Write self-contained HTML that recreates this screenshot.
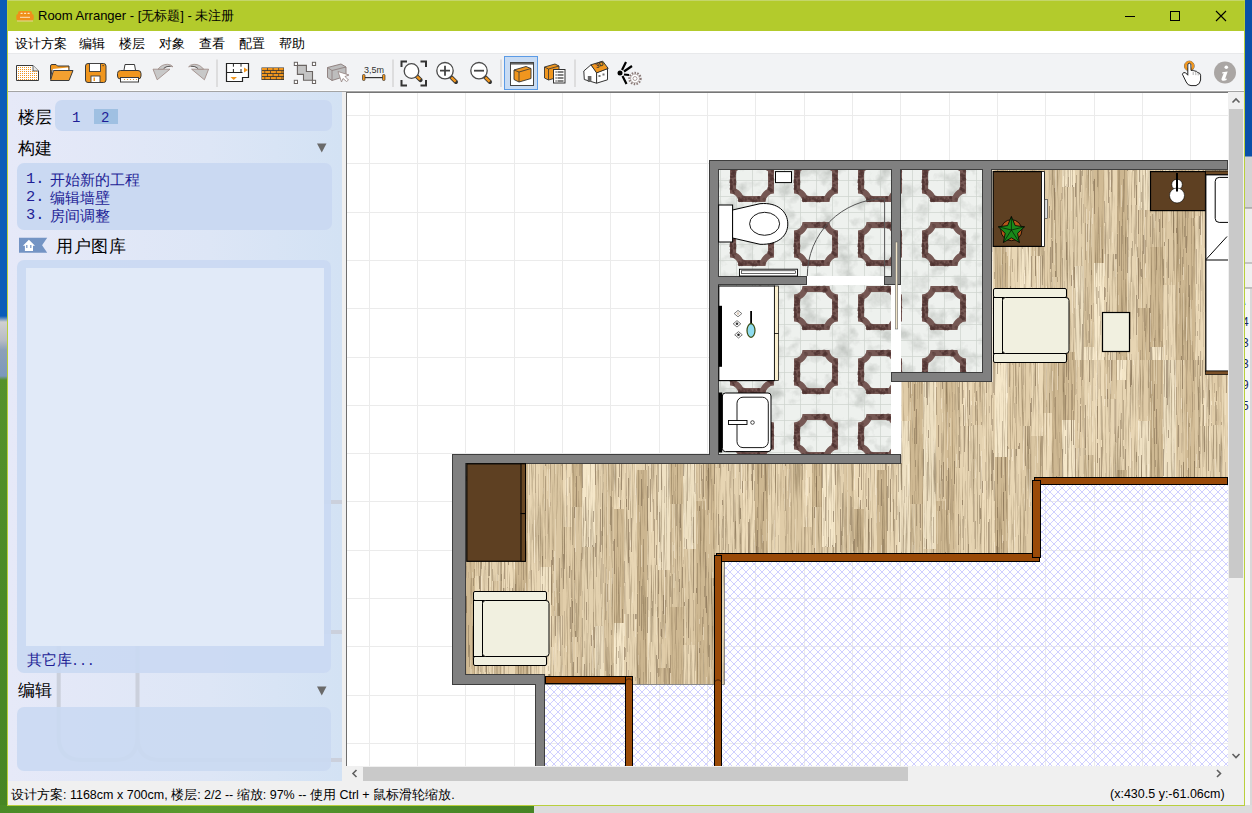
<!DOCTYPE html>
<html><head><meta charset="utf-8">
<style>
*{margin:0;padding:0;box-sizing:border-box}
html,body{width:1252px;height:813px;overflow:hidden;font-family:"Liberation Sans",sans-serif}
body{position:relative;background:#4a8a26}
.a{position:absolute}
#desk-l{left:0;top:0;width:8px;height:813px;background:linear-gradient(#0a5cb8 0,#0a5cb8 316px,#d0d0d0 322px,#b8bcc4 340px,#8ca0b8 350px,#7c98bc 376px,#55922c 380px,#4a8a26 600px,#468524 813px)}
#desk-b{left:0;top:805px;width:1252px;height:8px;background:linear-gradient(90deg,#4a8a26,#5a9a2e 200px,#4c8c28 400px,#468424 534px)}
#desk-b2{left:534px;top:805px;width:718px;height:8px;background:#dcdcdc}
#desk-r{left:1245px;top:0;width:7px;height:805px;background:linear-gradient(#0a50a8 0,#0a50a8 156px,#d4d4d4 157px,#d4d4d4 207px,#888 208px,#ececec 209px,#ececec 262px,#999 263px,#f0f0f0 264px,#f0f0f0 287px,#888 288px,#f7f7f7 289px)}
#wborder{left:7px;top:0;width:1238px;height:806px;border:1px solid #b9cf3c;border-top:1px solid #c4d66a}
#title{left:8px;top:1px;width:1236px;height:30px;background:#b3cb2c}
#title .t{left:30px;top:6px;font-size:13px;color:#000;white-space:nowrap}
#menu{left:8px;top:31px;width:1236px;height:23px;background:#fff;border-bottom:1px solid #e8e9eb}
#menu span{position:absolute;top:5px;font-size:12.6px;color:#000;white-space:nowrap}
#tb{left:8px;top:54px;width:1236px;height:38px;background:#f2f3f5;border-bottom:1px solid #a4a4a4;box-shadow:inset 0 -1px 0 #fbfbfb}
#panel{left:8px;top:92px;width:334px;height:689px;background:linear-gradient(90deg,#e6e9f8,#dde6f6 60%,#d3e2f4)}
#gap{left:342px;top:92px;width:4px;height:689px;background:#f0f0f0}
#vs{left:1228px;top:92px;width:16px;height:674px;background:#f0f0f0}
#hs{left:346px;top:766px;width:882px;height:15px;background:#f0f0f0}
#corner{left:1228px;top:766px;width:16px;height:15px;background:#f0f0f0}
#status{left:8px;top:781px;width:1236px;height:24px;background:#f0f0f0}
#status span{position:absolute;top:6px;font-size:12.5px;color:#000;white-space:nowrap}
.box{position:absolute;background:#cad9f2;border-radius:7px}
.hd{position:absolute;font-size:16.8px;color:#000;white-space:nowrap}
.bl{position:absolute;color:#1e1e96;font-size:15.4px;white-space:nowrap}
</style></head><body>
<div id="desk-l" class="a"></div>
<div id="desk-b" class="a"></div>
<div id="desk-b2" class="a"></div>
<div id="desk-r" class="a" style="overflow:hidden">
  <div class="a" style="left:-3px;top:291px;font-size:12px;line-height:21px;color:#1a2a60;width:20px">\<br>4<br>3<br>3<br>9<br>5</div>
  <div class="a" style="left:5px;top:289px;width:2px;height:516px;background:#d8d8d8"></div>
</div>
<div id="wborder" class="a"></div>
<div id="title" class="a">
  <svg class="a" style="left:8px;top:9px" width="18" height="12" viewBox="0 0 18 12">
    <rect x="2" y="1" width="14" height="6" rx="2" fill="#f0901a"/>
    <rect x="0.3" y="4" width="4" height="6.5" rx="1.8" fill="#f0901a"/>
    <rect x="13.7" y="4" width="4" height="6.5" rx="1.8" fill="#f0901a"/>
    <rect x="3" y="6.5" width="12" height="4" fill="#f0901a"/>
    <rect x="4.5" y="2.8" width="2.2" height="1.3" rx="0.6" fill="#fde6c0"/><rect x="8" y="2.8" width="2.2" height="1.3" rx="0.6" fill="#fde6c0"/><rect x="11.5" y="2.8" width="2.2" height="1.3" rx="0.6" fill="#fde6c0"/>
    <rect x="4" y="6.8" width="10" height="1" fill="#fde6c0"/>
    <path d="M1,11 L17,11" stroke="#f8d8b0" stroke-width="0.8"/>
  </svg>
  <div class="t a">Room Arranger - [无标题] - 未注册</div>
  <svg class="a" style="left:1110px;top:0" width="126" height="30" viewBox="0 0 126 30">
    <rect x="7" y="15" width="10" height="1" fill="#000"/>
    <rect x="52.5" y="10.5" width="9" height="9" fill="none" stroke="#000" stroke-width="1"/>
    <path d="M98,10 L108,20 M108,10 L98,20" stroke="#000" stroke-width="1.1"/>
  </svg>
</div>
<div id="menu" class="a">
  <span style="left:7px">设计方案</span>
  <span style="left:71px">编辑</span>
  <span style="left:111px">楼层</span>
  <span style="left:151px">对象</span>
  <span style="left:191px">查看</span>
  <span style="left:231px">配置</span>
  <span style="left:271px">帮助</span>
</div>
<div id="tb" class="a"></div>
<svg class="a" style="left:0;top:54px" width="1252" height="38" viewBox="0 54 1252 38">
<path d="M16.5,65.5 L33,65.5 L38.5,71 L38.5,80.5 L16.5,80.5 Z" fill="#fff" stroke="#3a3a3a" stroke-width="1"/>
<path d="M33,65.5 L33,71 L38.5,71" fill="#e8e8e8" stroke="#3a3a3a" stroke-width="0.8"/>
<rect x="18" y="67" width="1" height="1" fill="#f0961e"/>
<rect x="20" y="67" width="1" height="1" fill="#f0961e"/>
<rect x="22" y="67" width="1" height="1" fill="#f0961e"/>
<rect x="24" y="67" width="1" height="1" fill="#f0961e"/>
<rect x="26" y="67" width="1" height="1" fill="#f0961e"/>
<rect x="28" y="67" width="1" height="1" fill="#f0961e"/>
<rect x="30" y="67" width="1" height="1" fill="#f0961e"/>
<rect x="18" y="69" width="1" height="1" fill="#f0961e"/>
<rect x="20" y="69" width="1" height="1" fill="#f0961e"/>
<rect x="22" y="69" width="1" height="1" fill="#f0961e"/>
<rect x="24" y="69" width="1" height="1" fill="#f0961e"/>
<rect x="26" y="69" width="1" height="1" fill="#f0961e"/>
<rect x="28" y="69" width="1" height="1" fill="#f0961e"/>
<rect x="30" y="69" width="1" height="1" fill="#f0961e"/>
<rect x="18" y="71" width="1" height="1" fill="#f0961e"/>
<rect x="20" y="71" width="1" height="1" fill="#f0961e"/>
<rect x="22" y="71" width="1" height="1" fill="#f0961e"/>
<rect x="24" y="71" width="1" height="1" fill="#f0961e"/>
<rect x="26" y="71" width="1" height="1" fill="#f0961e"/>
<rect x="28" y="71" width="1" height="1" fill="#f0961e"/>
<rect x="30" y="71" width="1" height="1" fill="#f0961e"/>
<rect x="32" y="71" width="1" height="1" fill="#f0961e"/>
<rect x="34" y="71" width="1" height="1" fill="#f0961e"/>
<rect x="36" y="71" width="1" height="1" fill="#f0961e"/>
<rect x="18" y="73" width="1" height="1" fill="#f0961e"/>
<rect x="20" y="73" width="1" height="1" fill="#f0961e"/>
<rect x="22" y="73" width="1" height="1" fill="#f0961e"/>
<rect x="24" y="73" width="1" height="1" fill="#f0961e"/>
<rect x="26" y="73" width="1" height="1" fill="#f0961e"/>
<rect x="28" y="73" width="1" height="1" fill="#f0961e"/>
<rect x="30" y="73" width="1" height="1" fill="#f0961e"/>
<rect x="32" y="73" width="1" height="1" fill="#f0961e"/>
<rect x="34" y="73" width="1" height="1" fill="#f0961e"/>
<rect x="36" y="73" width="1" height="1" fill="#f0961e"/>
<rect x="18" y="75" width="1" height="1" fill="#f0961e"/>
<rect x="20" y="75" width="1" height="1" fill="#f0961e"/>
<rect x="22" y="75" width="1" height="1" fill="#f0961e"/>
<rect x="24" y="75" width="1" height="1" fill="#f0961e"/>
<rect x="26" y="75" width="1" height="1" fill="#f0961e"/>
<rect x="28" y="75" width="1" height="1" fill="#f0961e"/>
<rect x="30" y="75" width="1" height="1" fill="#f0961e"/>
<rect x="32" y="75" width="1" height="1" fill="#f0961e"/>
<rect x="34" y="75" width="1" height="1" fill="#f0961e"/>
<rect x="36" y="75" width="1" height="1" fill="#f0961e"/>
<rect x="18" y="77" width="1" height="1" fill="#f0961e"/>
<rect x="20" y="77" width="1" height="1" fill="#f0961e"/>
<rect x="22" y="77" width="1" height="1" fill="#f0961e"/>
<rect x="24" y="77" width="1" height="1" fill="#f0961e"/>
<rect x="26" y="77" width="1" height="1" fill="#f0961e"/>
<rect x="28" y="77" width="1" height="1" fill="#f0961e"/>
<rect x="30" y="77" width="1" height="1" fill="#f0961e"/>
<rect x="32" y="77" width="1" height="1" fill="#f0961e"/>
<rect x="34" y="77" width="1" height="1" fill="#f0961e"/>
<rect x="36" y="77" width="1" height="1" fill="#f0961e"/>
<rect x="18" y="79" width="1" height="1" fill="#f0961e"/>
<rect x="20" y="79" width="1" height="1" fill="#f0961e"/>
<rect x="22" y="79" width="1" height="1" fill="#f0961e"/>
<rect x="24" y="79" width="1" height="1" fill="#f0961e"/>
<rect x="26" y="79" width="1" height="1" fill="#f0961e"/>
<rect x="28" y="79" width="1" height="1" fill="#f0961e"/>
<rect x="30" y="79" width="1" height="1" fill="#f0961e"/>
<rect x="32" y="79" width="1" height="1" fill="#f0961e"/>
<rect x="34" y="79" width="1" height="1" fill="#f0961e"/>
<rect x="36" y="79" width="1" height="1" fill="#f0961e"/>
<path d="M50.5,66 Q50.5,64.5 52,64.5 L56,64.5 L57.5,66 L69,66 L69,70 L52,70 L50.5,79 Z" fill="#f0961e" stroke="#3a3a3a" stroke-width="1"/>
<path d="M52.5,69 L68,67.5 L68.5,71 L53,72 Z" fill="#fff"/>
<path d="M53.5,70.5 L73,70.5 L69,80.5 L50.5,80.5 Z" fill="#f4a030" stroke="#3a3a3a" stroke-width="1" stroke-linejoin="round"/>
<rect x="85.5" y="63.5" width="20.5" height="19" rx="2.5" fill="#f0961e" stroke="#3a3a3a" stroke-width="1"/>
<rect x="89.5" y="63.5" width="11" height="8" fill="#fff" stroke="#3a3a3a" stroke-width="0.9"/>
<rect x="91" y="76" width="9" height="6.5" fill="#fff" stroke="#3a3a3a" stroke-width="0.9"/>
<rect x="93.5" y="77.5" width="1.5" height="3.5" fill="#f0961e"/>
<rect x="102.5" y="65" width="1.2" height="1.2" fill="#3a3a3a"/>
<path d="M123.5,73 L125,64.5 L134.5,64.5 L136,73 Z" fill="#fff" stroke="#3a3a3a" stroke-width="1"/>
<rect x="117.5" y="70.5" width="23.5" height="8.5" rx="3" fill="#f0961e" stroke="#3a3a3a" stroke-width="1"/>
<rect x="120.5" y="77.5" width="18" height="4.5" fill="#fff" stroke="#3a3a3a" stroke-width="1"/>
<rect x="124" y="79" width="1" height="1" fill="#f0961e"/>
<rect x="127" y="79" width="1" height="1" fill="#f0961e"/>
<rect x="130" y="79" width="1" height="1" fill="#f0961e"/>
<rect x="133" y="79" width="1" height="1" fill="#f0961e"/>
<rect x="136" y="79" width="1" height="1" fill="#f0961e"/>
<path d="M153,69.2 L170,69.2 L157.2,79.8 Z" fill="#c8c8c8" stroke="#9a8580" stroke-width="0.8" stroke-linejoin="round"/><path d="M158,69.2 Q161.5,64.3 167.5,64.3 Q171.5,64.5 173,66.8 Q169,65.6 166,66.8 Q164,67.8 163.5,69.2 Z" fill="#c8c8c8" stroke="#9a8580" stroke-width="0.7"/><path d="M163.8,68.3 Q166.5,66 170.5,66.3" stroke="#555" stroke-width="0.9" fill="none"/>
<g transform="translate(361.6,0) scale(-1,1)"><path d="M153,69.2 L170,69.2 L157.2,79.8 Z" fill="#c8c8c8" stroke="#9a8580" stroke-width="0.8" stroke-linejoin="round"/><path d="M158,69.2 Q161.5,64.3 167.5,64.3 Q171.5,64.5 173,66.8 Q169,65.6 166,66.8 Q164,67.8 163.5,69.2 Z" fill="#c8c8c8" stroke="#9a8580" stroke-width="0.7"/><path d="M163.8,68.3 Q166.5,66 170.5,66.3" stroke="#555" stroke-width="0.9" fill="none"/></g>
<rect x="216.5" y="59.5" width="1" height="27.5" fill="#c8c8c8"/>
<rect x="392.5" y="59.5" width="1" height="27.5" fill="#c8c8c8"/>
<rect x="500.5" y="59.5" width="1" height="27.5" fill="#c8c8c8"/>
<rect x="574.5" y="59.5" width="1" height="27.5" fill="#c8c8c8"/>
<path d="M226.5,63.5 L248.5,63.5 L248.5,77.5 L242.5,77.5 L242.5,81.5 L226.5,81.5 Z" fill="#fff" stroke="#222" stroke-width="1.2"/>
<path d="M227,72.5 L242.5,72.5 M233.4,63.5 L233.4,66.7 M233.4,69 L233.4,72.5 M241,63.5 L241,66.7 M241,69 L241,72.5" stroke="#222" stroke-width="1" fill="none"/>
<path d="M244,67.5 L248,70 L244,72.5 Z" fill="#f0961e"/>
<path d="M230.5,77 L237,77 L233.7,80 Z" fill="#f0961e"/>
<rect x="261.5" y="67.5" width="22.5" height="12.5" fill="#333"/>
<rect x="262" y="68" width="5.0" height="2.2" fill="#f0961e"/>
<rect x="267.7" y="68" width="5.0" height="2.2" fill="#f0961e"/>
<rect x="273.4" y="68" width="5.0" height="2.2" fill="#f0961e"/>
<rect x="279.09999999999997" y="68" width="4.4" height="2.2" fill="#f0961e"/>
<rect x="262" y="71" width="2.5" height="2.2" fill="#f0961e"/>
<rect x="265.2" y="71" width="5.0" height="2.2" fill="#f0961e"/>
<rect x="270.9" y="71" width="5.0" height="2.2" fill="#f0961e"/>
<rect x="276.59999999999997" y="71" width="5.0" height="2.2" fill="#f0961e"/>
<rect x="282.29999999999995" y="71" width="1.2" height="2.2" fill="#f0961e"/>
<rect x="262" y="74" width="5.0" height="2.2" fill="#f0961e"/>
<rect x="267.7" y="74" width="5.0" height="2.2" fill="#f0961e"/>
<rect x="273.4" y="74" width="5.0" height="2.2" fill="#f0961e"/>
<rect x="279.09999999999997" y="74" width="4.4" height="2.2" fill="#f0961e"/>
<rect x="262" y="77" width="2.5" height="2.2" fill="#f0961e"/>
<rect x="265.2" y="77" width="5.0" height="2.2" fill="#f0961e"/>
<rect x="270.9" y="77" width="5.0" height="2.2" fill="#f0961e"/>
<rect x="276.59999999999997" y="77" width="5.0" height="2.2" fill="#f0961e"/>
<rect x="282.29999999999995" y="77" width="1.2" height="2.2" fill="#f0961e"/>
<path d="M297.4,65.4 L306.4,65.4 L306.4,71.5 L312.5,71.5 L312.5,80.2 L303.5,80.2 L303.5,74.4 L297.4,74.4 Z" fill="#c4c4c4" stroke="#6a6462" stroke-width="1.1"/>
<rect x="294.29999999999995" y="62.3" width="3.2" height="3.2" fill="#fff" stroke="#6a6462" stroke-width="1"/>
<rect x="312.4" y="62.3" width="3.2" height="3.2" fill="#fff" stroke="#6a6462" stroke-width="1"/>
<rect x="294.29999999999995" y="80.30000000000001" width="3.2" height="3.2" fill="#fff" stroke="#6a6462" stroke-width="1"/>
<rect x="312.4" y="80.30000000000001" width="3.2" height="3.2" fill="#fff" stroke="#6a6462" stroke-width="1"/>
<path d="M327.5,67.5 L341,64 L346,67 L346,76 L332,80.5 L327.5,77.5 Z" fill="#bdbdbd" stroke="#8a7a78" stroke-width="0.9"/>
<path d="M327.5,67.5 L332,70.5 L346,67 M332,70.5 L332,80.5" fill="none" stroke="#8a7a78" stroke-width="0.8"/>
<path d="M338,71.5 L349,75 L345,76.5 L348.5,80 L346.5,81.5 L343,78.5 L341.5,82 Z" fill="#fff" stroke="#9a8a88" stroke-width="0.9"/>
<text x="364" y="73" font-family="Liberation Sans" font-size="9" fill="#333">3,5m</text>
<rect x="363" y="77" width="22" height="1.2" fill="#333"/>
<rect x="362.5" y="74.5" width="2.5" height="6" rx="1" fill="#f0961e" stroke="#333" stroke-width="0.7"/>
<rect x="382.5" y="74.5" width="2.5" height="6" rx="1" fill="#f0961e" stroke="#333" stroke-width="0.7"/>
<path d="M401.5,67 L401.5,61.5 L407,61.5 M420.5,61.5 L426,61.5 L426,67 M401.5,80 L401.5,85.5 L407,85.5 M420.5,85.5 L426,85.5 L426,80" stroke="#333" stroke-width="2" fill="none"/>
<path d="M416.5,76 L420.5,80" stroke="#333" stroke-width="4.2" stroke-linecap="round"/><path d="M416.8,76.3 L420.2,79.7" stroke="#f0961e" stroke-width="2.5"/>
<circle cx="411.5" cy="71" r="7.3" fill="#fff" stroke="#4a4a4a" stroke-width="1.3"/>
<path d="M451,77 L456,82" stroke="#333" stroke-width="4" stroke-linecap="round"/><path d="M451.3,77.3 L455.7,81.7" stroke="#f0961e" stroke-width="2.4"/>
<circle cx="445" cy="70.7" r="8.2" fill="#fff" stroke="#4a4a4a" stroke-width="1.3"/>
<path d="M440,70.7 L450,70.7 M445,65.7 L445,75.7" stroke="#444" stroke-width="1.8"/>
<path d="M485,77 L490,82" stroke="#333" stroke-width="4" stroke-linecap="round"/><path d="M485.3,77.3 L489.7,81.7" stroke="#f0961e" stroke-width="2.4"/>
<circle cx="479" cy="70.7" r="8.2" fill="#fff" stroke="#4a4a4a" stroke-width="1.3"/>
<path d="M474,70.7 L484,70.7" stroke="#444" stroke-width="1.8"/>
<rect x="504.5" y="56.5" width="33" height="33" fill="#c9dcf3" stroke="#5b9be6" stroke-width="1"/>
<rect x="510.5" y="62.5" width="23" height="23" fill="#fff" stroke="#444" stroke-width="1"/>
<rect x="511" y="63" width="22" height="1.6" fill="#666"/>
<path d="M514,70 L526,66.5 L531,68.5 L531,78.5 L519,82 L514,79.5 Z" fill="#f0961e" stroke="#333" stroke-width="0.9"/>
<path d="M514,70 L519,72 L531,68.5 M519,72 L519,82" fill="none" stroke="#333" stroke-width="0.8"/>
<path d="M544.5,67 L555,64 L559,66 L559,77 L548.5,80 L544.5,78 Z" fill="#f0961e" stroke="#333" stroke-width="0.9"/>
<path d="M544.5,67 L548.5,69 L559,66 M548.5,69 L548.5,80" fill="none" stroke="#333" stroke-width="0.8"/>
<rect x="553.5" y="69.5" width="11.5" height="13.5" fill="#fff" stroke="#333" stroke-width="1"/>
<rect x="555.5" y="71.4" width="1.2" height="1.2" fill="#333"/><rect x="557.5" y="71.4" width="6" height="1.2" fill="#333"/>
<rect x="555.5" y="74.4" width="1.2" height="1.2" fill="#333"/><rect x="557.5" y="74.4" width="6" height="1.2" fill="#333"/>
<rect x="555.5" y="77.4" width="1.2" height="1.2" fill="#333"/><rect x="557.5" y="77.4" width="6" height="1.2" fill="#333"/>
<rect x="555.5" y="80.4" width="1.2" height="1.2" fill="#333"/><rect x="557.5" y="80.4" width="6" height="1.2" fill="#333"/>
<path d="M584.3,79.5 L583.8,71 L591,64.8 L596.6,72 L596.6,83.2 Z" fill="#fff" stroke="#333" stroke-width="1" stroke-linejoin="round"/>
<path d="M596.6,72.5 L607.5,68.5 L607.5,79.8 L596.6,83.2 Z" fill="#fff" stroke="#333" stroke-width="1" stroke-linejoin="round"/>
<path d="M591,64.8 L602.7,61.2 L608.2,68.4 L596.6,72.9 Z" fill="#f0961e" stroke="#333" stroke-width="1" stroke-linejoin="round"/>
<text x="0" y="0" font-family="Liberation Sans" font-size="6.5" font-weight="bold" fill="#333" transform="translate(596.5,68.2) rotate(-22)">3D</text>
<rect x="587.8" y="76" width="3.6" height="6" fill="#666"/>
<rect x="598.5" y="75" width="2" height="2" fill="#777"/><rect x="602.5" y="73.5" width="2" height="2" fill="#777"/>
<circle cx="620" cy="73" r="2.5" fill="#000"/>
<path d="M622,70 L626,62 M624,71.5 L632,66 M624,74.5 L629,75 M622.5,76 L626.5,84" stroke="#000" stroke-width="2.2"/>
<circle cx="635" cy="78.5" r="5.6" fill="#fff" stroke="#8a7a78" stroke-width="2.2" stroke-dasharray="1.5 1.3"/>
<circle cx="635" cy="78.5" r="4.4" fill="#fff" stroke="#8a7a78" stroke-width="0.6"/>
<circle cx="635" cy="78.5" r="2" fill="none" stroke="#8a7a78" stroke-width="0.7"/>
<circle cx="1189.3" cy="66" r="4.9" fill="none" stroke="#333" stroke-width="0.7"/>
<circle cx="1189.3" cy="66" r="3.7" fill="none" stroke="#f0961e" stroke-width="2.4"/>
<path d="M1187.8,64.2 L1187.8,75.2 L1185.6,72.8 Q1183.2,71.6 1182.4,74.2 L1186.2,82 Q1187.8,85.6 1191,85.6 L1196,85.6 Q1200.2,84.2 1200.6,80 L1200.6,75.2 Q1200.2,72.6 1197.8,72.6 Q1196.8,71 1194.8,71 Q1193.6,69.8 1191,70.4 L1190.9,64.2 Q1189.3,62.2 1187.8,64.2 Z" fill="#fff" stroke="#222" stroke-width="1"/>
<path d="M1193.2,71.5 L1193.2,75 M1195.8,72 L1195.8,75.2 M1198.2,73 L1198.2,75.4" stroke="#999" stroke-width="0.8"/>
<circle cx="1225" cy="72.5" r="11" fill="#aaa6a4"/>
<circle cx="1226.3" cy="67.3" r="1.8" fill="#fff"/>
<path d="M1222.3,72.2 L1227.7,71.4 L1225.2,78.4 Q1225.3,79.2 1226.9,78.5 L1226.5,80 Q1224.3,81.3 1222,80.5 Q1221.1,79.8 1221.6,78.6 L1223.7,73.3 L1222.1,73.5 Z" fill="#fff"/>
</svg>
<div id="panel" class="a">
  <svg class="a" style="left:0;top:0" width="334" height="689" viewBox="0 0 334 689"><path d="M50.7,545 L50.7,645 Q50.7,668 74,668 L107,668 Q129.5,668 129.5,645 L129.5,545 M129.5,645 Q129.5,668 152,668 L334,668" fill="none" stroke="#cbd0dc" stroke-width="4"/><path d="M315,410 L334,410 M315,540 L334,540" stroke="#cbd0dc" stroke-width="4"/></svg>
<div class="hd" style="left:10px;top:14px">楼层</div>
<div class="box" style="left:47px;top:8px;width:277px;height:31px"></div>
<div class="a" style="left:86px;top:17px;width:24px;height:15px;background:#9fc0e2"></div>
<div class="bl" style="left:64px;top:18px;font-family:'Liberation Mono',monospace;font-size:14px">1</div>
<div class="bl" style="left:93px;top:18px;font-family:'Liberation Mono',monospace;font-size:14px">2</div>
<div class="hd" style="left:10px;top:45px">构建</div>
<svg class="a" style="left:309px;top:51px" width="10" height="10" viewBox="0 0 10 10"><path d="M0,0.5 L9.5,0.5 L4.75,9.5 Z" fill="#6a6a6a"/></svg>
<div class="box" style="left:9px;top:71px;width:314.6px;height:67px"></div>
<div class="bl" style="left:18px;top:78px;font-family:'Liberation Mono',monospace">1.</div>
<div class="bl" style="left:18px;top:96px;font-family:'Liberation Mono',monospace">2.</div>
<div class="bl" style="left:18px;top:114px;font-family:'Liberation Mono',monospace">3.</div>
<div class="bl" style="left:42px;top:78px">开始新的工程</div>
<div class="bl" style="left:42px;top:96px">编辑墙壁</div>
<div class="bl" style="left:42px;top:114px">房间调整</div>
<svg class="a" style="left:10px;top:145px" width="31" height="18" viewBox="0 0 31 18"><path d="M1,0.8 L29.2,0.8 L24.1,8.2 L29.2,15.8 L1,15.8 Z" fill="#7494c4"/><path d="M10.9,2.7 L17,8.8 L15,8.8 L15,13.9 L6.9,13.9 L6.9,8.8 L4.9,8.8 Z" fill="#fff"/><rect x="8.2" y="8" width="1.2" height="3" fill="#7494c4"/><rect x="12.2" y="8" width="1.2" height="3" fill="#7494c4"/></svg>
<div class="hd" style="left:48px;top:143px;letter-spacing:0.5px">用户图库</div>
<div class="box" style="left:9px;top:167.5px;width:314px;height:413.5px;background:rgba(202,217,242,0.92)"></div>
<div class="a" style="left:18px;top:175.6px;width:297.7px;height:378.6px;background:rgba(226,235,248,0.94)"></div>
<div class="bl" style="left:19px;top:559px;font-size:14.6px">其它库<span style="font-family:'Liberation Mono',monospace;font-size:13.5px;letter-spacing:-0.2px;margin-left:-1px">...</span></div>
<div class="hd" style="left:10px;top:587px">编辑</div>
<svg class="a" style="left:309px;top:594px" width="10" height="10" viewBox="0 0 10 10"><path d="M0,0.5 L9.5,0.5 L4.75,9.5 Z" fill="#6a6a6a"/></svg>
<div class="box" style="left:9px;top:614.7px;width:314px;height:64.6px;background:rgba(202,217,242,0.9)"></div>
</div>
<div id="gap" class="a"></div>
<svg class="a" style="left:346px;top:92px" width="882" height="675" viewBox="346 92 882 675">
<defs>
<pattern id="wood" patternUnits="userSpaceOnUse" x="0" y="0" width="240" height="360">
<rect width="240" height="360" fill="#dcc8a4"/>
<rect x="0" y="0" width="12" height="66" fill="#ecdab8"/>
<rect x="0" y="66" width="12" height="246" fill="#e7d5b3"/>
<rect x="0" y="312" width="12" height="48" fill="#ebd9b7"/>
<rect x="12" y="0" width="10" height="65" fill="#e1cda9"/>
<rect x="12" y="65" width="10" height="156" fill="#e4d2b0"/>
<rect x="12" y="221" width="10" height="139" fill="#decaa6"/>
<rect x="22" y="0" width="13" height="121" fill="#e8d6b4"/>
<rect x="22" y="121" width="13" height="107" fill="#eddbb9"/>
<rect x="22" y="228" width="13" height="109" fill="#e9d7b5"/>
<rect x="22" y="337" width="13" height="23" fill="#e8d6b4"/>
<rect x="35" y="0" width="13" height="97" fill="#f5e7c9"/>
<rect x="35" y="97" width="13" height="256" fill="#ceb892"/>
<rect x="35" y="353" width="13" height="7" fill="#cdb791"/>
<rect x="48" y="0" width="12" height="89" fill="#e3cfab"/>
<rect x="48" y="89" width="12" height="260" fill="#e9d7b5"/>
<rect x="48" y="349" width="12" height="11" fill="#ddc9a5"/>
<rect x="60" y="0" width="11" height="66" fill="#e2ceaa"/>
<rect x="60" y="66" width="11" height="141" fill="#e0cca8"/>
<rect x="60" y="207" width="11" height="107" fill="#f3e5c7"/>
<rect x="60" y="314" width="11" height="46" fill="#e7d5b3"/>
<rect x="71" y="0" width="12" height="76" fill="#ecdab8"/>
<rect x="71" y="76" width="12" height="180" fill="#dac6a2"/>
<rect x="71" y="256" width="12" height="104" fill="#e8d6b4"/>
<rect x="83" y="0" width="9" height="53" fill="#d9c5a1"/>
<rect x="83" y="53" width="9" height="114" fill="#ecdab8"/>
<rect x="83" y="167" width="9" height="193" fill="#e2ceaa"/>
<rect x="92" y="0" width="10" height="147" fill="#ceb892"/>
<rect x="92" y="147" width="10" height="130" fill="#d9c5a1"/>
<rect x="92" y="277" width="10" height="83" fill="#dfcba7"/>
<rect x="102" y="0" width="13" height="60" fill="#d2bc96"/>
<rect x="102" y="60" width="13" height="127" fill="#f5e7c9"/>
<rect x="102" y="187" width="13" height="165" fill="#e3d1af"/>
<rect x="102" y="352" width="13" height="8" fill="#d1bb95"/>
<rect x="115" y="0" width="9" height="88" fill="#e2ceaa"/>
<rect x="115" y="88" width="9" height="178" fill="#e3d1af"/>
<rect x="115" y="266" width="9" height="94" fill="#eddfc1"/>
<rect x="124" y="0" width="10" height="95" fill="#e9d7b5"/>
<rect x="124" y="95" width="10" height="252" fill="#dbc7a3"/>
<rect x="124" y="347" width="10" height="13" fill="#f6e8ca"/>
<rect x="134" y="0" width="10" height="149" fill="#eddbb9"/>
<rect x="134" y="149" width="10" height="114" fill="#d0ba94"/>
<rect x="134" y="263" width="10" height="97" fill="#f6e8ca"/>
<rect x="144" y="0" width="13" height="39" fill="#dbc7a3"/>
<rect x="144" y="39" width="13" height="215" fill="#e8d6b4"/>
<rect x="144" y="254" width="13" height="106" fill="#e5d3b1"/>
<rect x="157" y="0" width="10" height="20" fill="#f4e6c8"/>
<rect x="157" y="20" width="10" height="90" fill="#e6d4b2"/>
<rect x="157" y="110" width="10" height="239" fill="#ccb690"/>
<rect x="157" y="349" width="10" height="11" fill="#ceb892"/>
<rect x="167" y="0" width="11" height="205" fill="#e9d7b5"/>
<rect x="167" y="205" width="11" height="155" fill="#e7d5b3"/>
<rect x="178" y="0" width="12" height="61" fill="#e0cca8"/>
<rect x="178" y="61" width="12" height="149" fill="#efe1c3"/>
<rect x="178" y="210" width="12" height="98" fill="#e0cca8"/>
<rect x="178" y="308" width="12" height="52" fill="#d2bc96"/>
<rect x="190" y="0" width="13" height="144" fill="#cfb993"/>
<rect x="190" y="144" width="13" height="103" fill="#dac6a2"/>
<rect x="190" y="247" width="13" height="100" fill="#ceb892"/>
<rect x="190" y="347" width="13" height="13" fill="#f6e8ca"/>
<rect x="203" y="0" width="13" height="189" fill="#eee0c2"/>
<rect x="203" y="189" width="13" height="96" fill="#ddc9a5"/>
<rect x="203" y="285" width="13" height="75" fill="#ebd9b7"/>
<rect x="216" y="0" width="9" height="141" fill="#decaa6"/>
<rect x="216" y="141" width="9" height="219" fill="#cdb791"/>
<rect x="225" y="0" width="10" height="218" fill="#d3bd97"/>
<rect x="225" y="218" width="10" height="142" fill="#cfb993"/>
<rect x="235" y="0" width="5" height="108" fill="#dbc7a3"/>
<rect x="235" y="108" width="5" height="108" fill="#e3cfab"/>
<rect x="235" y="216" width="5" height="144" fill="#ebd9b7"/>
<path d="M0,0h1v16h-1zM2,0h1v44h-1zM3,45h1v21h-1zM9,30h1v25h-1zM0,202h1v33h-1zM2,140h1v5h-1zM4,66h1v26h-1zM6,258h1v17h-1zM6,300h1v12h-1zM8,66h1v45h-1zM8,218h1v16h-1zM9,198h1v18h-1zM10,238h1v36h-1zM6,312h1v14h-1zM16,31h1v10h-1zM20,148h1v11h-1zM26,0h1v33h-1zM32,90h1v31h-1zM33,93h1v17h-1zM22,121h1v12h-1zM24,199h1v20h-1zM28,162h1v43h-1zM32,121h1v9h-1zM23,228h1v5h-1zM23,247h1v6h-1zM28,253h1v19h-1zM32,228h1v24h-1zM37,0h1v14h-1zM47,86h1v11h-1zM37,170h1v32h-1zM37,316h1v6h-1zM41,97h1v21h-1zM43,132h1v29h-1zM45,97h1v34h-1zM58,86h1v3h-1zM59,83h1v6h-1zM49,346h1v3h-1zM50,286h1v30h-1zM51,339h1v10h-1zM56,89h1v7h-1zM52,349h1v7h-1zM70,43h1v23h-1zM62,196h1v11h-1zM65,66h1v40h-1zM61,289h1v16h-1zM69,314h1v40h-1zM71,38h1v14h-1zM75,0h1v26h-1zM71,200h1v45h-1zM72,190h1v15h-1zM71,256h1v31h-1zM75,256h1v20h-1zM78,355h1v5h-1zM83,194h1v35h-1zM89,206h1v12h-1zM90,247h1v22h-1zM96,116h1v31h-1zM92,241h1v22h-1zM94,147h1v11h-1zM94,188h1v32h-1zM95,271h1v6h-1zM93,302h1v45h-1zM97,297h1v16h-1zM97,343h1v17h-1zM105,35h1v25h-1zM108,0h1v20h-1zM102,89h1v39h-1zM105,137h1v24h-1zM108,177h1v10h-1zM111,60h1v21h-1zM112,185h1v2h-1zM113,60h1v25h-1zM113,151h1v11h-1zM104,304h1v35h-1zM106,242h1v18h-1zM111,275h1v11h-1zM114,267h1v21h-1zM107,352h1v8h-1zM120,46h1v26h-1zM122,0h1v20h-1zM115,88h1v37h-1zM115,183h1v14h-1zM120,149h1v43h-1zM122,324h1v36h-1zM125,45h1v43h-1zM129,0h1v22h-1zM131,305h1v14h-1zM137,46h1v33h-1zM137,83h1v20h-1zM138,118h1v19h-1zM139,98h1v19h-1zM140,140h1v9h-1zM141,87h1v43h-1zM134,179h1v35h-1zM142,249h1v14h-1zM147,29h1v10h-1zM151,0h1v21h-1zM146,139h1v8h-1zM148,118h1v32h-1zM148,159h1v44h-1zM151,158h1v34h-1zM144,287h1v13h-1zM146,302h1v38h-1zM155,254h1v5h-1zM165,20h1v9h-1zM165,89h1v21h-1zM159,318h1v10h-1zM161,119h1v27h-1zM159,349h1v5h-1zM167,126h1v45h-1zM170,0h1v27h-1zM170,119h1v33h-1zM171,0h1v25h-1zM176,185h1v20h-1zM167,237h1v36h-1zM176,295h1v40h-1zM179,152h1v30h-1zM181,95h1v35h-1zM178,210h1v24h-1zM178,258h1v41h-1zM181,269h1v8h-1zM183,235h1v19h-1zM189,308h1v44h-1zM194,24h1v27h-1zM196,49h1v35h-1zM199,219h1v13h-1zM200,144h1v24h-1zM202,207h1v21h-1zM190,347h1v13h-1zM191,347h1v13h-1zM201,347h1v13h-1zM203,89h1v27h-1zM206,0h1v38h-1zM206,179h1v10h-1zM207,0h1v45h-1zM208,70h1v8h-1zM203,278h1v7h-1zM204,242h1v4h-1zM208,239h1v39h-1zM213,189h1v44h-1zM218,65h1v22h-1zM222,0h1v29h-1zM223,102h1v35h-1zM216,228h1v5h-1zM219,146h1v5h-1zM219,288h1v5h-1zM221,356h1v4h-1zM225,192h1v26h-1zM228,108h1v42h-1zM233,0h1v21h-1zM234,101h1v23h-1zM226,236h1v17h-1zM238,0h1v5h-1zM239,91h1v17h-1zM238,154h1v31h-1zM238,356h1v4h-1zM239,216h1v13h-1z" fill="#5a4630" fill-opacity="0.42"/>
<path d="M3,30h1v8h-1zM8,59h1v7h-1zM0,270h1v42h-1zM2,159h1v19h-1zM5,293h1v19h-1zM9,312h1v6h-1zM14,23h1v10h-1zM16,45h1v16h-1zM18,193h1v22h-1zM20,96h1v33h-1zM20,221h1v38h-1zM25,102h1v19h-1zM29,46h1v7h-1zM32,0h1v38h-1zM27,227h1v1h-1zM23,306h1v31h-1zM34,294h1v5h-1zM40,0h1v5h-1zM47,0h1v33h-1zM37,97h1v27h-1zM38,187h1v28h-1zM41,329h1v24h-1zM42,349h1v4h-1zM45,263h1v24h-1zM39,353h1v7h-1zM48,87h1v2h-1zM52,0h1v5h-1zM54,43h1v15h-1zM55,0h1v26h-1zM56,27h1v17h-1zM49,100h1v35h-1zM51,89h1v8h-1zM51,292h1v42h-1zM57,242h1v40h-1zM58,175h1v36h-1zM63,0h1v25h-1zM65,176h1v23h-1zM68,66h1v28h-1zM64,284h1v30h-1zM67,289h1v15h-1zM68,306h1v5h-1zM61,354h1v6h-1zM63,314h1v19h-1zM81,76h1v30h-1zM81,208h1v10h-1zM89,117h1v16h-1zM84,251h1v37h-1zM84,354h1v6h-1zM86,318h1v20h-1zM90,272h1v31h-1zM98,0h1v16h-1zM99,98h1v18h-1zM100,200h1v36h-1zM101,193h1v8h-1zM93,357h1v3h-1zM100,337h1v9h-1zM103,0h1v32h-1zM104,0h1v23h-1zM108,23h1v37h-1zM108,150h1v27h-1zM110,169h1v18h-1zM102,187h1v12h-1zM113,252h1v28h-1zM114,308h1v20h-1zM115,0h1v35h-1zM121,198h1v36h-1zM123,204h1v19h-1zM118,266h1v39h-1zM120,266h1v43h-1zM124,58h1v37h-1zM125,90h1v5h-1zM132,0h1v41h-1zM133,0h1v18h-1zM125,278h1v33h-1zM127,287h1v33h-1zM128,331h1v12h-1zM132,95h1v36h-1zM136,263h1v10h-1zM139,286h1v30h-1zM149,0h1v23h-1zM149,39h1v33h-1zM149,172h1v18h-1zM149,197h1v42h-1zM154,39h1v35h-1zM147,254h1v38h-1zM148,310h1v45h-1zM155,317h1v4h-1zM159,0h1v20h-1zM162,0h1v9h-1zM157,274h1v44h-1zM158,110h1v35h-1zM163,269h1v11h-1zM163,312h1v19h-1zM165,237h1v17h-1zM166,357h1v3h-1zM171,78h1v41h-1zM169,338h1v22h-1zM175,205h1v39h-1zM179,47h1v12h-1zM181,208h1v2h-1zM183,175h1v35h-1zM184,126h1v17h-1zM180,262h1v14h-1zM182,251h1v28h-1zM186,210h1v37h-1zM180,350h1v10h-1zM201,0h1v34h-1zM190,172h1v41h-1zM195,199h1v22h-1zM200,170h1v11h-1zM201,341h1v6h-1zM197,347h1v13h-1zM204,0h1v37h-1zM214,0h1v15h-1zM214,93h1v39h-1zM213,240h1v31h-1zM206,340h1v15h-1zM208,285h1v9h-1zM219,100h1v38h-1zM220,281h1v4h-1zM223,249h1v15h-1zM223,345h1v15h-1zM226,0h1v44h-1zM227,121h1v34h-1zM231,119h1v41h-1zM227,340h1v20h-1zM232,266h1v34h-1zM235,0h1v17h-1zM238,75h1v25h-1zM235,322h1v14h-1zM238,304h1v7h-1zM239,319h1v21h-1z" fill="#5a4630" fill-opacity="0.2"/>
<path d="M7,19h1v28h-1zM8,0h1v4h-1zM10,0h1v11h-1zM11,45h1v17h-1zM0,66h1v28h-1zM1,254h1v37h-1zM3,66h1v41h-1zM4,206h1v42h-1zM5,121h1v38h-1zM5,168h1v42h-1zM10,111h1v17h-1zM3,312h1v35h-1zM15,0h1v12h-1zM17,49h1v16h-1zM19,0h1v27h-1zM20,0h1v42h-1zM14,134h1v45h-1zM20,173h1v11h-1zM13,221h1v31h-1zM16,359h1v1h-1zM21,238h1v38h-1zM26,121h1v9h-1zM27,121h1v18h-1zM34,160h1v13h-1zM24,228h1v25h-1zM33,337h1v19h-1zM38,93h1v4h-1zM38,325h1v28h-1zM40,314h1v29h-1zM41,169h1v20h-1zM43,228h1v26h-1zM46,329h1v7h-1zM47,139h1v34h-1zM55,37h1v26h-1zM49,211h1v8h-1zM52,164h1v16h-1zM54,306h1v41h-1zM55,133h1v44h-1zM58,114h1v32h-1zM58,300h1v18h-1zM58,341h1v8h-1zM59,201h1v9h-1zM60,57h1v9h-1zM62,0h1v29h-1zM63,52h1v14h-1zM67,139h1v35h-1zM70,94h1v39h-1zM70,142h1v4h-1zM60,207h1v40h-1zM64,233h1v37h-1zM65,267h1v9h-1zM73,0h1v5h-1zM72,214h1v19h-1zM76,220h1v8h-1zM82,255h1v1h-1zM75,335h1v25h-1zM79,312h1v13h-1zM87,145h1v22h-1zM85,305h1v43h-1zM88,344h1v16h-1zM90,167h1v13h-1zM92,93h1v20h-1zM94,38h1v9h-1zM95,123h1v4h-1zM98,131h1v16h-1zM99,72h1v11h-1zM95,239h1v14h-1zM100,277h1v44h-1zM111,30h1v30h-1zM103,158h1v18h-1zM106,184h1v3h-1zM108,60h1v28h-1zM102,231h1v19h-1zM104,281h1v7h-1zM107,273h1v44h-1zM109,303h1v41h-1zM113,314h1v38h-1zM116,29h1v5h-1zM117,40h1v31h-1zM121,19h1v7h-1zM120,88h1v8h-1zM120,116h1v31h-1zM121,247h1v19h-1zM123,88h1v26h-1zM123,122h1v45h-1zM123,266h1v37h-1zM127,56h1v21h-1zM125,207h1v16h-1zM126,147h1v41h-1zM127,340h1v6h-1zM132,147h1v37h-1zM133,303h1v19h-1zM132,347h1v12h-1zM139,0h1v29h-1zM138,207h1v27h-1zM140,321h1v14h-1zM145,36h1v3h-1zM148,0h1v7h-1zM144,226h1v28h-1zM145,113h1v26h-1zM145,222h1v32h-1zM146,93h1v43h-1zM156,39h1v44h-1zM151,317h1v12h-1zM154,332h1v20h-1zM157,206h1v27h-1zM161,110h1v4h-1zM162,219h1v25h-1zM163,110h1v29h-1zM163,235h1v34h-1zM165,279h1v45h-1zM166,297h1v25h-1zM172,101h1v41h-1zM177,146h1v9h-1zM168,218h1v32h-1zM171,205h1v28h-1zM171,354h1v6h-1zM179,0h1v45h-1zM186,105h1v32h-1zM179,308h1v8h-1zM183,308h1v14h-1zM185,308h1v18h-1zM185,328h1v9h-1zM194,131h1v13h-1zM195,57h1v12h-1zM195,115h1v16h-1zM197,0h1v39h-1zM198,211h1v11h-1zM199,144h1v19h-1zM199,232h1v15h-1zM195,247h1v37h-1zM195,330h1v11h-1zM200,314h1v28h-1zM202,310h1v37h-1zM203,24h1v43h-1zM204,178h1v9h-1zM211,157h1v4h-1zM215,123h1v11h-1zM203,200h1v4h-1zM206,262h1v6h-1zM203,285h1v44h-1zM207,285h1v41h-1zM211,345h1v12h-1zM215,285h1v26h-1zM221,73h1v20h-1zM221,141h1v40h-1zM226,206h1v12h-1zM228,212h1v6h-1zM232,32h1v20h-1zM233,125h1v16h-1zM233,153h1v36h-1zM234,34h1v16h-1zM231,218h1v26h-1zM232,341h1v19h-1zM233,352h1v8h-1zM239,19h1v14h-1zM238,284h1v16h-1z" fill="#5a4630" fill-opacity="0.12"/>
<path d="M11,63h1v3h-1zM1,199h1v10h-1zM3,156h1v34h-1zM8,184h1v32h-1zM0,351h1v9h-1zM15,42h1v23h-1zM21,62h1v3h-1zM12,209h1v12h-1zM13,65h1v34h-1zM13,119h1v43h-1zM15,161h1v28h-1zM19,84h1v28h-1zM19,135h1v29h-1zM20,195h1v26h-1zM21,214h1v7h-1zM12,345h1v15h-1zM15,245h1v27h-1zM31,35h1v30h-1zM31,114h1v7h-1zM32,59h1v12h-1zM33,0h1v33h-1zM34,0h1v35h-1zM29,159h1v37h-1zM34,121h1v20h-1zM24,304h1v33h-1zM26,261h1v40h-1zM34,272h1v7h-1zM42,61h1v36h-1zM35,224h1v7h-1zM36,186h1v8h-1zM37,147h1v11h-1zM38,296h1v18h-1zM43,181h1v39h-1zM41,353h1v7h-1zM42,353h1v7h-1zM46,353h1v7h-1zM49,0h1v27h-1zM59,0h1v7h-1zM51,210h1v28h-1zM52,259h1v13h-1zM55,89h1v17h-1zM55,106h1v27h-1zM56,292h1v9h-1zM58,349h1v10h-1zM65,116h1v35h-1zM67,66h1v20h-1zM69,66h1v23h-1zM62,207h1v9h-1zM62,224h1v25h-1zM68,207h1v25h-1zM68,314h1v36h-1zM73,197h1v14h-1zM78,243h1v13h-1zM79,198h1v34h-1zM79,233h1v23h-1zM82,76h1v44h-1zM80,256h1v40h-1zM82,256h1v29h-1zM89,33h1v20h-1zM84,167h1v42h-1zM87,335h1v11h-1zM91,210h1v28h-1zM91,239h1v43h-1zM95,37h1v42h-1zM92,147h1v38h-1zM96,243h1v34h-1zM92,320h1v27h-1zM94,350h1v10h-1zM97,277h1v5h-1zM99,341h1v19h-1zM106,0h1v17h-1zM112,24h1v26h-1zM113,51h1v9h-1zM105,60h1v10h-1zM105,76h1v18h-1zM105,186h1v1h-1zM102,258h1v39h-1zM107,187h1v42h-1zM113,187h1v42h-1zM108,352h1v8h-1zM112,352h1v8h-1zM120,0h1v17h-1zM120,38h1v6h-1zM116,175h1v42h-1zM121,171h1v14h-1zM122,133h1v43h-1zM125,223h1v37h-1zM127,224h1v18h-1zM128,95h1v5h-1zM129,314h1v29h-1zM130,136h1v29h-1zM131,137h1v34h-1zM131,270h1v5h-1zM133,181h1v10h-1zM128,347h1v13h-1zM141,36h1v44h-1zM137,149h1v38h-1zM136,287h1v17h-1zM138,291h1v7h-1zM144,201h1v22h-1zM147,39h1v8h-1zM155,39h1v43h-1zM144,357h1v3h-1zM145,288h1v9h-1zM148,254h1v24h-1zM150,332h1v28h-1zM153,254h1v17h-1zM156,254h1v5h-1zM156,331h1v29h-1zM158,66h1v12h-1zM160,60h1v37h-1zM161,53h1v16h-1zM163,40h1v40h-1zM163,86h1v13h-1zM157,234h1v38h-1zM157,332h1v7h-1zM159,221h1v45h-1zM161,226h1v45h-1zM163,179h1v33h-1zM166,344h1v5h-1zM168,106h1v32h-1zM173,139h1v32h-1zM174,159h1v39h-1zM176,92h1v10h-1zM176,115h1v45h-1zM167,205h1v15h-1zM170,312h1v27h-1zM171,248h1v34h-1zM172,241h1v15h-1zM177,247h1v10h-1zM177,299h1v14h-1zM188,0h1v28h-1zM178,96h1v36h-1zM181,61h1v17h-1zM181,192h1v10h-1zM188,61h1v20h-1zM185,210h1v7h-1zM185,240h1v23h-1zM186,304h1v4h-1zM178,308h1v9h-1zM184,308h1v23h-1zM190,0h1v38h-1zM192,135h1v9h-1zM194,68h1v16h-1zM195,100h1v7h-1zM190,216h1v21h-1zM192,214h1v30h-1zM196,144h1v22h-1zM190,295h1v18h-1zM194,338h1v9h-1zM196,247h1v23h-1zM207,102h1v39h-1zM210,0h1v13h-1zM213,157h1v26h-1zM203,259h1v17h-1zM216,27h1v28h-1zM221,105h1v16h-1zM222,119h1v20h-1zM217,203h1v41h-1zM222,257h1v18h-1zM224,226h1v11h-1zM226,116h1v5h-1zM229,63h1v4h-1zM234,193h1v7h-1zM234,209h1v9h-1zM225,218h1v30h-1zM228,265h1v32h-1zM229,285h1v22h-1zM233,218h1v8h-1zM238,27h1v23h-1zM239,57h1v30h-1zM236,249h1v35h-1zM237,331h1v5h-1z" fill="#5a4630" fill-opacity="0.3"/>
<path d="M4,38h1v28h-1zM11,41h1v4h-1zM1,216h1v29h-1zM9,66h1v15h-1zM6,339h1v21h-1zM15,99h1v19h-1zM17,214h1v7h-1zM21,91h1v42h-1zM13,289h1v39h-1zM19,221h1v37h-1zM34,182h1v27h-1zM31,334h1v3h-1zM32,314h1v23h-1zM28,337h1v23h-1zM46,0h1v43h-1zM36,322h1v17h-1zM42,175h1v8h-1zM42,264h1v36h-1zM45,223h1v29h-1zM46,240h1v12h-1zM47,234h1v22h-1zM49,241h1v25h-1zM52,89h1v12h-1zM54,160h1v43h-1zM63,66h1v44h-1zM69,109h1v38h-1zM64,273h1v11h-1zM66,294h1v19h-1zM66,314h1v11h-1zM78,0h1v24h-1zM73,223h1v23h-1zM74,191h1v40h-1zM74,251h1v5h-1zM77,76h1v27h-1zM73,287h1v18h-1zM77,256h1v34h-1zM79,256h1v35h-1zM86,0h1v40h-1zM86,47h1v6h-1zM86,110h1v36h-1zM86,157h1v10h-1zM87,118h1v18h-1zM86,286h1v6h-1zM91,331h1v29h-1zM92,11h1v20h-1zM97,0h1v30h-1zM95,147h1v45h-1zM92,277h1v30h-1zM107,60h1v30h-1zM108,115h1v11h-1zM112,270h1v43h-1zM118,88h1v22h-1zM116,266h1v43h-1zM126,209h1v42h-1zM129,211h1v29h-1zM132,208h1v16h-1zM134,102h1v28h-1zM137,0h1v39h-1zM139,138h1v9h-1zM136,351h1v9h-1zM146,14h1v25h-1zM150,0h1v34h-1zM144,39h1v7h-1zM150,180h1v7h-1zM155,104h1v31h-1zM156,128h1v35h-1zM144,254h1v22h-1zM152,345h1v15h-1zM155,260h1v17h-1zM161,185h1v22h-1zM170,72h1v36h-1zM173,0h1v5h-1zM168,257h1v43h-1zM168,354h1v6h-1zM178,60h1v1h-1zM178,61h1v19h-1zM179,198h1v8h-1zM186,148h1v25h-1zM188,104h1v32h-1zM184,210h1v45h-1zM185,264h1v14h-1zM178,352h1v8h-1zM191,21h1v13h-1zM193,185h1v6h-1zM194,183h1v15h-1zM190,313h1v29h-1zM199,347h1v13h-1zM204,153h1v24h-1zM206,77h1v16h-1zM211,166h1v23h-1zM212,185h1v4h-1zM213,81h1v29h-1zM215,0h1v40h-1zM204,345h1v15h-1zM221,38h1v11h-1zM219,259h1v5h-1zM223,267h1v13h-1zM225,139h1v11h-1zM227,52h1v38h-1zM227,98h1v12h-1zM226,317h1v24h-1zM236,94h1v13h-1z" fill="#fff6e4" fill-opacity="0.4"/>
<path d="M5,18h1v45h-1zM6,27h1v36h-1zM5,247h1v35h-1zM10,203h1v24h-1zM14,37h1v9h-1zM12,221h1v21h-1zM16,324h1v33h-1zM17,268h1v24h-1zM20,282h1v5h-1zM21,335h1v25h-1zM24,76h1v13h-1zM25,33h1v22h-1zM23,121h1v19h-1zM30,226h1v2h-1zM34,316h1v21h-1zM25,358h1v2h-1zM29,337h1v18h-1zM31,359h1v1h-1zM37,61h1v19h-1zM45,34h1v4h-1zM41,242h1v23h-1zM43,97h1v18h-1zM46,159h1v22h-1zM46,337h1v16h-1zM40,353h1v7h-1zM48,0h1v8h-1zM48,89h1v36h-1zM48,161h1v32h-1zM63,128h1v6h-1zM64,139h1v11h-1zM67,109h1v22h-1zM69,270h1v36h-1zM66,349h1v11h-1zM67,314h1v45h-1zM78,29h1v25h-1zM81,68h1v8h-1zM82,66h1v6h-1zM75,96h1v18h-1zM75,159h1v33h-1zM75,192h1v45h-1zM76,243h1v13h-1zM75,283h1v29h-1zM82,305h1v43h-1zM85,53h1v22h-1zM85,120h1v15h-1zM88,53h1v33h-1zM89,325h1v13h-1zM94,146h1v1h-1zM94,223h1v42h-1zM95,277h1v35h-1zM98,349h1v11h-1zM114,72h1v37h-1zM103,297h1v13h-1zM111,187h1v24h-1zM106,352h1v8h-1zM116,0h1v22h-1zM118,0h1v7h-1zM118,63h1v16h-1zM122,60h1v28h-1zM116,99h1v12h-1zM122,249h1v16h-1zM117,287h1v5h-1zM128,33h1v26h-1zM130,25h1v32h-1zM132,56h1v26h-1zM127,95h1v35h-1zM127,132h1v43h-1zM128,220h1v43h-1zM129,164h1v32h-1zM131,218h1v29h-1zM131,321h1v26h-1zM135,26h1v32h-1zM136,13h1v37h-1zM140,227h1v31h-1zM134,263h1v35h-1zM154,34h1v4h-1zM150,97h1v44h-1zM152,232h1v11h-1zM149,349h1v11h-1zM157,0h1v20h-1zM160,10h1v10h-1zM161,0h1v20h-1zM158,295h1v10h-1zM159,152h1v10h-1zM162,356h1v4h-1zM170,35h1v32h-1zM171,134h1v38h-1zM169,251h1v32h-1zM176,251h1v24h-1zM178,0h1v40h-1zM187,56h1v5h-1zM189,0h1v22h-1zM181,284h1v24h-1zM185,342h1v18h-1zM190,42h1v18h-1zM192,36h1v42h-1zM194,0h1v21h-1zM196,0h1v24h-1zM202,59h1v15h-1zM192,144h1v24h-1zM192,182h1v23h-1zM193,207h1v21h-1zM194,144h1v39h-1zM194,213h1v15h-1zM199,187h1v9h-1zM193,341h1v6h-1zM204,89h1v30h-1zM205,0h1v4h-1zM209,37h1v6h-1zM212,153h1v23h-1zM213,25h1v26h-1zM203,189h1v8h-1zM204,228h1v14h-1zM205,242h1v41h-1zM208,189h1v33h-1zM209,189h1v32h-1zM211,282h1v3h-1zM217,123h1v18h-1zM220,108h1v26h-1zM222,53h1v9h-1zM223,0h1v5h-1zM217,151h1v33h-1zM218,282h1v42h-1zM222,141h1v8h-1zM223,293h1v37h-1zM228,194h1v4h-1zM229,153h1v31h-1zM230,58h1v28h-1zM232,212h1v6h-1zM230,300h1v40h-1zM231,309h1v36h-1zM239,166h1v8h-1zM236,290h1v16h-1z" fill="#fff6e4" fill-opacity="0.25"/>
</pattern>
<pattern id="marble" patternUnits="userSpaceOnUse" x="720" y="148" width="64" height="64">
<rect x="0" y="0" width="1" height="64" fill="#cdd3cd" opacity="0.7"/>
<rect x="0" y="0" width="64" height="1" fill="#cdd3cd" opacity="0.7"/>
<rect x="16" y="0" width="1" height="64" fill="#cdd3cd" opacity="0.7"/>
<rect x="0" y="16" width="64" height="1" fill="#cdd3cd" opacity="0.7"/>
<rect x="32" y="0" width="1" height="64" fill="#cdd3cd" opacity="0.7"/>
<rect x="0" y="32" width="64" height="1" fill="#cdd3cd" opacity="0.7"/>
<rect x="48" y="0" width="1" height="64" fill="#cdd3cd" opacity="0.7"/>
<rect x="0" y="48" width="64" height="1" fill="#cdd3cd" opacity="0.7"/>
<path d="M18.5,10 L45.5,10 A8.5,8.5 0 0 0 54,18.5 L54,45.5 A8.5,8.5 0 0 0 45.5,54 L18.5,54 A8.5,8.5 0 0 0 10,45.5 L10,18.5 A8.5,8.5 0 0 0 18.5,10 Z M23.20,16 L40.80,16 A14.5,14.5 0 0 0 48,23.20 L48,40.80 A14.5,14.5 0 0 0 40.80,48 L23.20,48 A14.5,14.5 0 0 0 16,40.80 L16,23.20 A14.5,14.5 0 0 0 23.20,16 Z" fill="#765854" fill-rule="evenodd"/>
<circle cx="51.5" cy="28.6" r="1.6" fill="#4a2e2c" opacity="0.38"/>
<circle cx="14.2" cy="25.7" r="2.0" fill="#4a2e2c" opacity="0.54"/>
<circle cx="11.4" cy="29.3" r="1.1" fill="#4a2e2c" opacity="0.41"/>
<circle cx="12.2" cy="38.3" r="0.9" fill="#4a2e2c" opacity="0.65"/>
<circle cx="39.3" cy="52.4" r="1.1" fill="#4a2e2c" opacity="0.59"/>
<circle cx="11.1" cy="37.6" r="1.3" fill="#4a2e2c" opacity="0.67"/>
<circle cx="49.2" cy="41.9" r="1.0" fill="#4a2e2c" opacity="0.44"/>
<circle cx="11.4" cy="39.3" r="1.3" fill="#4a2e2c" opacity="0.68"/>
<circle cx="11.2" cy="34.2" r="1.6" fill="#4a2e2c" opacity="0.72"/>
<circle cx="50.2" cy="37.2" r="1.5" fill="#4a2e2c" opacity="0.58"/>
<circle cx="53.1" cy="35.5" r="1.1" fill="#4a2e2c" opacity="0.40"/>
<circle cx="11.7" cy="21.3" r="1.3" fill="#4a2e2c" opacity="0.41"/>
<circle cx="15.0" cy="41.7" r="1.5" fill="#4a2e2c" opacity="0.37"/>
<circle cx="33.3" cy="52.9" r="1.1" fill="#4a2e2c" opacity="0.44"/>
<circle cx="21.0" cy="12.6" r="0.8" fill="#4a2e2c" opacity="0.43"/>
<circle cx="23.1" cy="49.0" r="1.8" fill="#4a2e2c" opacity="0.48"/>
<circle cx="11.4" cy="28.8" r="1.3" fill="#4a2e2c" opacity="0.70"/>
<circle cx="35.1" cy="11.1" r="1.4" fill="#4a2e2c" opacity="0.52"/>
<circle cx="50.7" cy="43.3" r="1.1" fill="#4a2e2c" opacity="0.47"/>
<circle cx="13.8" cy="44.7" r="1.3" fill="#4a2e2c" opacity="0.59"/>
<circle cx="31.1" cy="51.8" r="1.2" fill="#4a2e2c" opacity="0.63"/>
<circle cx="34.3" cy="11.0" r="0.8" fill="#4a2e2c" opacity="0.50"/>
<circle cx="34.4" cy="50.2" r="1.2" fill="#4a2e2c" opacity="0.48"/>
<circle cx="26.8" cy="50.5" r="1.7" fill="#4a2e2c" opacity="0.36"/>
<circle cx="49.8" cy="27.1" r="1.8" fill="#4a2e2c" opacity="0.45"/>
<circle cx="14.8" cy="35.9" r="1.5" fill="#4a2e2c" opacity="0.73"/>
<circle cx="52.6" cy="30.4" r="1.0" fill="#4a2e2c" opacity="0.48"/>
<circle cx="11.7" cy="26.0" r="0.8" fill="#4a2e2c" opacity="0.73"/>
<circle cx="50.3" cy="41.5" r="1.8" fill="#4a2e2c" opacity="0.38"/>
<circle cx="51.1" cy="30.0" r="1.8" fill="#4a2e2c" opacity="0.54"/>
<circle cx="29.9" cy="50.6" r="1.9" fill="#4a2e2c" opacity="0.41"/>
<circle cx="10.9" cy="33.5" r="1.7" fill="#4a2e2c" opacity="0.36"/>
<circle cx="33.1" cy="52.7" r="1.8" fill="#4a2e2c" opacity="0.69"/>
<circle cx="40.1" cy="15.0" r="1.9" fill="#4a2e2c" opacity="0.63"/>
<circle cx="15.1" cy="34.0" r="1.7" fill="#4a2e2c" opacity="0.42"/>
<circle cx="32.6" cy="13.4" r="1.9" fill="#4a2e2c" opacity="0.59"/>
<circle cx="44.3" cy="51.2" r="1.8" fill="#4a2e2c" opacity="0.37"/>
<circle cx="32.9" cy="11.6" r="1.0" fill="#4a2e2c" opacity="0.67"/>
<circle cx="48.8" cy="40.4" r="1.6" fill="#4a2e2c" opacity="0.70"/>
<circle cx="25.5" cy="51.5" r="1.4" fill="#4a2e2c" opacity="0.37"/>
<circle cx="41.3" cy="11.8" r="0.9" fill="#4a2e2c" opacity="0.37"/>
<circle cx="41.2" cy="14.8" r="1.4" fill="#4a2e2c" opacity="0.48"/>
<circle cx="29.0" cy="50.5" r="1.2" fill="#4a2e2c" opacity="0.46"/>
<circle cx="12.8" cy="22.2" r="1.7" fill="#4a2e2c" opacity="0.50"/>
<circle cx="50.8" cy="20.1" r="1.6" fill="#4a2e2c" opacity="0.57"/>
<circle cx="35.2" cy="13.3" r="1.2" fill="#4a2e2c" opacity="0.55"/>
<circle cx="13.4" cy="43.7" r="0.8" fill="#4a2e2c" opacity="0.44"/>
<circle cx="39.9" cy="14.2" r="1.0" fill="#4a2e2c" opacity="0.36"/>
<circle cx="22.2" cy="51.8" r="1.9" fill="#4a2e2c" opacity="0.64"/>
<circle cx="12.0" cy="36.4" r="1.5" fill="#4a2e2c" opacity="0.39"/>
<circle cx="31.3" cy="14.2" r="1.3" fill="#4a2e2c" opacity="0.56"/>
<circle cx="15.1" cy="23.7" r="1.8" fill="#4a2e2c" opacity="0.40"/>
<circle cx="11.0" cy="40.7" r="1.5" fill="#4a2e2c" opacity="0.67"/>
<circle cx="52.1" cy="21.8" r="1.9" fill="#4a2e2c" opacity="0.37"/>
<circle cx="49.9" cy="40.5" r="1.0" fill="#4a2e2c" opacity="0.45"/>
<circle cx="12.6" cy="25.6" r="1.9" fill="#4a2e2c" opacity="0.57"/>
<circle cx="10.9" cy="32.0" r="1.3" fill="#4a2e2c" opacity="0.65"/>
<circle cx="13.4" cy="23.1" r="1.9" fill="#4a2e2c" opacity="0.42"/>
<circle cx="12.9" cy="42.8" r="1.3" fill="#4a2e2c" opacity="0.64"/>
<circle cx="38.6" cy="49.4" r="1.4" fill="#4a2e2c" opacity="0.72"/>
<circle cx="36.5" cy="52.6" r="1.5" fill="#4a2e2c" opacity="0.58"/>
<circle cx="50.0" cy="27.0" r="1.8" fill="#4a2e2c" opacity="0.43"/>
<circle cx="52.2" cy="27.4" r="1.0" fill="#4a2e2c" opacity="0.75"/>
<circle cx="52.5" cy="31.2" r="1.8" fill="#4a2e2c" opacity="0.57"/>
<circle cx="41.3" cy="13.4" r="1.7" fill="#4a2e2c" opacity="0.73"/>
<circle cx="51.7" cy="42.2" r="1.7" fill="#4a2e2c" opacity="0.38"/>
<circle cx="25.3" cy="49.6" r="1.1" fill="#4a2e2c" opacity="0.42"/>
<circle cx="42.4" cy="14.1" r="1.8" fill="#4a2e2c" opacity="0.48"/>
<circle cx="22.1" cy="14.0" r="1.9" fill="#4a2e2c" opacity="0.36"/>
<circle cx="19.2" cy="50.3" r="1.3" fill="#4a2e2c" opacity="0.54"/>
<circle cx="12.8" cy="29.2" r="0.9" fill="#4a2e2c" opacity="0.46"/>
<circle cx="30.4" cy="12.9" r="1.1" fill="#4a2e2c" opacity="0.56"/>
<circle cx="38.7" cy="50.1" r="1.6" fill="#4a2e2c" opacity="0.61"/>
<circle cx="21.8" cy="53.0" r="1.2" fill="#4a2e2c" opacity="0.58"/>
<circle cx="14.9" cy="32.2" r="1.2" fill="#4a2e2c" opacity="0.64"/>
<circle cx="52.7" cy="23.7" r="1.6" fill="#4a2e2c" opacity="0.40"/>
<circle cx="51.6" cy="42.9" r="1.6" fill="#4a2e2c" opacity="0.52"/>
<circle cx="50.2" cy="30.9" r="1.0" fill="#4a2e2c" opacity="0.38"/>
<circle cx="14.0" cy="28.3" r="1.3" fill="#4a2e2c" opacity="0.70"/>
<circle cx="25.4" cy="52.2" r="1.2" fill="#4a2e2c" opacity="0.48"/>
<circle cx="28.2" cy="11.5" r="0.9" fill="#4a2e2c" opacity="0.46"/>
<circle cx="33.7" cy="11.2" r="0.9" fill="#4a2e2c" opacity="0.63"/>
<circle cx="11.9" cy="40.2" r="1.5" fill="#4a2e2c" opacity="0.41"/>
<circle cx="49.5" cy="33.2" r="1.0" fill="#4a2e2c" opacity="0.70"/>
<circle cx="19.8" cy="52.3" r="1.9" fill="#4a2e2c" opacity="0.73"/>
<circle cx="35.5" cy="53.1" r="1.6" fill="#4a2e2c" opacity="0.47"/>
<circle cx="14.4" cy="19.8" r="1.6" fill="#4a2e2c" opacity="0.39"/>
<circle cx="51.1" cy="31.8" r="1.4" fill="#4a2e2c" opacity="0.43"/>
<circle cx="40.1" cy="11.1" r="1.9" fill="#4a2e2c" opacity="0.39"/>
<circle cx="52.3" cy="22.5" r="1.5" fill="#4a2e2c" opacity="0.37"/>
</pattern>
<pattern id="hatch" patternUnits="userSpaceOnUse" x="0" y="0" width="8" height="8"><path d="M5,0h1v1h-1zM6,0h1v1h-1zM4,1h1v1h-1zM7,1h1v1h-1zM0,2h1v1h-1zM3,2h1v1h-1zM1,3h1v1h-1zM2,3h1v1h-1zM1,4h1v1h-1zM2,4h1v1h-1zM0,5h1v1h-1zM3,5h1v1h-1zM4,6h1v1h-1zM7,6h1v1h-1zM5,7h1v1h-1zM6,7h1v1h-1z" fill="#d0d0ff" shape-rendering="crispEdges"/></pattern>

<filter id="grain" x="0" y="0" width="1" height="1" filterUnits="objectBoundingBox" color-interpolation-filters="sRGB">
 <feTurbulence type="fractalNoise" baseFrequency="0.8 0.014" numOctaves="4" seed="5" result="n"/>
 <feColorMatrix in="n" type="matrix" values="0 0 0 0 0.40  0 0 0 0 0.32  0 0 0 0 0.20  1.2 0 0 0 -0.58" result="c"/>
 <feComposite in="c" in2="SourceAlpha" operator="in"/>
</filter>
<filter id="cloud" x="0" y="0" width="1" height="1" filterUnits="objectBoundingBox" color-interpolation-filters="sRGB">
 <feTurbulence type="fractalNoise" baseFrequency="0.055" numOctaves="4" seed="11" result="n"/>
 <feColorMatrix in="n" type="matrix" values="0 0 0 0 0.66  0 0 0 0 0.68  0 0 0 0 0.66  1.45 0 0 0 -0.69" result="c"/>
 <feComposite in="c" in2="SourceAlpha" operator="in"/>
</filter>
<clipPath id="tileclip"><rect x="718.5" y="169.5" width="172.5" height="106.5"/><rect x="718.5" y="285" width="172.5" height="169.5"/><rect x="901" y="169.5" width="81" height="203"/></clipPath>

</defs>
<rect x="346" y="92" width="882" height="675" fill="#fff"/>
<g><rect x="369" y="92" width="1" height="675" fill="#ebebeb"/><rect x="417" y="92" width="1" height="675" fill="#ebebeb"/><rect x="465" y="92" width="1" height="675" fill="#ebebeb"/><rect x="514" y="92" width="1" height="675" fill="#ebebeb"/><rect x="562" y="92" width="1" height="675" fill="#ebebeb"/><rect x="610" y="92" width="1" height="675" fill="#ebebeb"/><rect x="659" y="92" width="1" height="675" fill="#ebebeb"/><rect x="707" y="92" width="1" height="675" fill="#ebebeb"/><rect x="755" y="92" width="1" height="675" fill="#ebebeb"/><rect x="804" y="92" width="1" height="675" fill="#ebebeb"/><rect x="852" y="92" width="1" height="675" fill="#ebebeb"/><rect x="900" y="92" width="1" height="675" fill="#ebebeb"/><rect x="949" y="92" width="1" height="675" fill="#ebebeb"/><rect x="997" y="92" width="1" height="675" fill="#ebebeb"/><rect x="1045" y="92" width="1" height="675" fill="#ebebeb"/><rect x="1094" y="92" width="1" height="675" fill="#ebebeb"/><rect x="1142" y="92" width="1" height="675" fill="#ebebeb"/><rect x="1190" y="92" width="1" height="675" fill="#ebebeb"/><rect x="346" y="115" width="882" height="1" fill="#ebebeb"/><rect x="346" y="163" width="882" height="1" fill="#ebebeb"/><rect x="346" y="212" width="882" height="1" fill="#ebebeb"/><rect x="346" y="260" width="882" height="1" fill="#ebebeb"/><rect x="346" y="308" width="882" height="1" fill="#ebebeb"/><rect x="346" y="357" width="882" height="1" fill="#ebebeb"/><rect x="346" y="405" width="882" height="1" fill="#ebebeb"/><rect x="346" y="453" width="882" height="1" fill="#ebebeb"/><rect x="346" y="501" width="882" height="1" fill="#ebebeb"/><rect x="346" y="550" width="882" height="1" fill="#ebebeb"/><rect x="346" y="598" width="882" height="1" fill="#ebebeb"/><rect x="346" y="646" width="882" height="1" fill="#ebebeb"/><rect x="346" y="695" width="882" height="1" fill="#ebebeb"/><rect x="346" y="743" width="882" height="1" fill="#ebebeb"/></g>
<path d="M545,684 L724.5,684 L724.5,561 L1040,561 L1040,484 L1228,484 L1228,767 L545,767 Z" fill="url(#hatch)"/>
<path d="M466,463 L901.5,463 L901.5,382 L992.5,382 L992.5,169.5 L1228,169.5 L1228,480 L1036,480 L1036,557 L724.5,557 L724.5,684.5 L545,684.5 L545,674 L466,674 Z" fill="url(#wood)"/>
<path d="M466,463 L901.5,463 L901.5,382 L992.5,382 L992.5,169.5 L1228,169.5 L1228,480 L1036,480 L1036,557 L724.5,557 L724.5,684.5 L545,684.5 L545,674 L466,674 Z" fill="#000" filter="url(#grain)"/>
<path d="M724.5,561 L724.5,684.5 L545,684.5" fill="none" stroke="#8a8a8a" stroke-width="1"/>
<g clip-path="url(#tileclip)"><rect x="718" y="169" width="265" height="286" fill="#eef1ee"/><rect x="718" y="169" width="265" height="286" fill="#000" filter="url(#cloud)"/></g>
<rect x="718.5" y="169.5" width="172.5" height="106.5" fill="url(#marble)"/>
<rect x="718.5" y="285" width="172.5" height="169.5" fill="url(#marble)"/>
<rect x="901" y="169.5" width="81" height="203" fill="url(#marble)"/>
<rect x="891" y="285" width="10" height="169.5" fill="#fff"/>
<rect x="807" y="276" width="77.5" height="9" fill="#fff"/>
<g shape-rendering="crispEdges"><rect x="709" y="160" width="519" height="10" fill="#3e3e3e"/><rect x="709" y="160" width="10" height="304" fill="#3e3e3e"/><rect x="891" y="160" width="10" height="125" fill="#3e3e3e"/><rect x="709" y="276" width="98" height="9" fill="#3e3e3e"/><rect x="884" y="276" width="17" height="9" fill="#3e3e3e"/><rect x="982" y="160" width="10" height="222" fill="#3e3e3e"/><rect x="891" y="372" width="101" height="10" fill="#3e3e3e"/><rect x="452" y="454" width="449" height="10" fill="#3e3e3e"/><rect x="452" y="454" width="14" height="231" fill="#3e3e3e"/><rect x="452" y="674" width="93" height="11" fill="#3e3e3e"/><rect x="535" y="674" width="10" height="93" fill="#3e3e3e"/><rect x="710" y="161" width="517" height="8" fill="#808080"/><rect x="710" y="161" width="8" height="302" fill="#808080"/><rect x="892" y="161" width="8" height="123" fill="#808080"/><rect x="710" y="277" width="96" height="7" fill="#808080"/><rect x="885" y="277" width="15" height="7" fill="#808080"/><rect x="983" y="161" width="8" height="220" fill="#808080"/><rect x="892" y="373" width="99" height="8" fill="#808080"/><rect x="453" y="455" width="447" height="8" fill="#808080"/><rect x="453" y="455" width="12" height="229" fill="#808080"/><rect x="453" y="675" width="91" height="9" fill="#808080"/><rect x="536" y="675" width="8" height="91" fill="#808080"/></g>
<g shape-rendering="crispEdges">
<rect x="545" y="676" width="88" height="8" fill="#000"/>
<rect x="546" y="677" width="86" height="6" fill="#9a4a08"/>
<rect x="716" y="553" width="324" height="9" fill="#000"/>
<rect x="717" y="554" width="322" height="7" fill="#9a4a08"/>
<rect x="1034" y="477" width="194" height="8" fill="#000"/>
<rect x="1035" y="478" width="192" height="6" fill="#9a4a08"/>
<rect x="625" y="676" width="8" height="91" fill="#000"/>
<rect x="626" y="677" width="6" height="89" fill="#9a4a08"/>
<rect x="714" y="555" width="8" height="212" fill="#000"/>
<rect x="715" y="556" width="6" height="210" fill="#9a4a08"/>
<rect x="1032" y="480" width="9" height="78" fill="#000"/>
<rect x="1033" y="481" width="7" height="76" fill="#9a4a08"/>
</g>
<path d="M625.7,680.7 Q629,676.9 632.3,680.7" fill="none" stroke="#3a1a08" stroke-width="0.9"/>
<path d="M714.7,681.7 Q718,677.9 721.3,681.7" fill="none" stroke="#3a1a08" stroke-width="0.9"/>
<rect x="466.8" y="463.8" width="58.5" height="97.5" fill="#5e4022" stroke="#000" stroke-width="1.2"/>
<rect x="521" y="463.8" width="4.5" height="49.8" fill="#6a4824" stroke="#000" stroke-width="1"/>
<rect x="521" y="513.6" width="4.5" height="47.7" fill="#6a4824" stroke="#000" stroke-width="1"/>
<rect x="473.5" y="591.5" width="73" height="9" rx="1.5" fill="#f1f0e0" stroke="#000" stroke-width="1"/>
<rect x="473.5" y="656.5" width="73" height="9" rx="1.5" fill="#f1f0e0" stroke="#000" stroke-width="1"/>
<rect x="473.5" y="600.5" width="9" height="56" fill="#f1f0e0" stroke="#000" stroke-width="1"/>
<rect x="482.5" y="600.5" width="66.5" height="56" rx="3" fill="#f1f0e0" stroke="#000" stroke-width="1"/>
<rect x="993.5" y="288.5" width="73" height="9" rx="1.5" fill="#f1f0e0" stroke="#000" stroke-width="1"/>
<rect x="993.5" y="353.5" width="73" height="9" rx="1.5" fill="#f1f0e0" stroke="#000" stroke-width="1"/>
<rect x="993.5" y="297.5" width="9" height="56" fill="#f1f0e0" stroke="#000" stroke-width="1"/>
<rect x="1002.5" y="297.5" width="66.5" height="56" rx="3" fill="#f1f0e0" stroke="#000" stroke-width="1"/>
<rect x="1102.5" y="312.5" width="27" height="39" fill="#f1f0e0" stroke="#000" stroke-width="1.2"/>
<rect x="993.2" y="171.6" width="48.4" height="74.8" fill="#5e4022" stroke="#000" stroke-width="1.2"/>
<rect x="1041.6" y="171.6" width="3" height="74.8" fill="#fff" stroke="#000" stroke-width="0.8"/>
<rect x="1044.8" y="199.5" width="2.7" height="19" fill="#e0e0e0" stroke="#333" stroke-width="0.6"/>
<circle cx="1011.4" cy="230.2" r="10.5" fill="#b3561a" stroke="#000" stroke-width="0.8"/>
<path d="M1011.4,216.5 L1015.2,225.6 L1024.5,226.8 L1017.6,233.3 L1019.4,242.5 L1011.4,237.8 L1003.4,242.5 L1005.2,233.3 L998.3,226.8 L1007.6,225.6 Z" fill="#1a8a1a" stroke="#000" stroke-width="0.8"/>
<path d="M1011.4,216.5 L1011.4,230 M1024.5,226.8 L1011.4,230 M1019.4,242.5 L1011.4,230 M1003.4,242.5 L1011.4,230 M998.3,226.8 L1011.4,230" stroke="#000" stroke-width="0.6"/>
<rect x="1150.5" y="171.6" width="55" height="39" fill="#5e4022" stroke="#000" stroke-width="1.2"/>
<circle cx="1177" cy="184.5" r="5.3" fill="#fff" stroke="#000" stroke-width="0.6"/>
<circle cx="1177" cy="195.5" r="7.5" fill="#fff" stroke="#000" stroke-width="0.6"/>
<rect x="1176" y="173" width="2" height="18.5" fill="#000"/>
<rect x="1205.5" y="171" width="23" height="4" fill="#6a4824" stroke="#000" stroke-width="0.8"/>
<rect x="1205.8" y="174.8" width="23" height="196.5" fill="#fff" stroke="#000" stroke-width="1.2"/>
<rect x="1215.2" y="177.4" width="20" height="45" rx="4" fill="#fff" stroke="#000" stroke-width="1"/>
<path d="M1206,260 L1228,260 M1206,259.5 L1227,236.5" stroke="#000" stroke-width="1"/>
<rect x="1205.5" y="371" width="23" height="3.5" fill="#7a5028" stroke="#000" stroke-width="0.7"/>
<rect x="718.6" y="205" width="14" height="37" fill="#fff" stroke="#000" stroke-width="1"/>
<path d="M732.6,210 L760,203.7 C778,202 787.8,212 787.8,224 C787.8,236 778,245 760,244.3 L732.6,238 Z" fill="#fff" stroke="#000" stroke-width="1"/>
<ellipse cx="764.6" cy="223.8" rx="15" ry="11.5" fill="#fff" stroke="#000" stroke-width="0.9"/>
<rect x="775.5" y="171.6" width="16" height="11" fill="#fff" stroke="#000" stroke-width="1"/>
<rect x="739.5" y="269.2" width="58" height="6.8" fill="#fff" stroke="#000" stroke-width="0.9"/>
<rect x="741.5" y="270.8" width="54" height="2.5" fill="#fff" stroke="#000" stroke-width="0.6"/>
<path d="M807.3,276 A77.3,77.3 0 0 1 884.6,198.7 L884.6,276" fill="none" stroke="#555" stroke-width="1"/>
<rect x="895.3" y="242" width="2.4" height="87" fill="#f0e4c8" stroke="#6a6a6a" stroke-width="0.6"/>
<rect x="718.8" y="286" width="55.7" height="94.6" fill="#fff" stroke="#000" stroke-width="1.1"/>
<rect x="774.5" y="286" width="4" height="47.4" fill="#fbf0d0" stroke="#000" stroke-width="0.7"/>
<rect x="774.5" y="333.4" width="4" height="47.2" fill="#fbf0d0" stroke="#000" stroke-width="0.7"/>
<rect x="718.6" y="305.8" width="3.4" height="61" fill="#000"/>
<path d="M734.2,313.6 L738,310.40000000000003 L741.8,313.6 L738,316.8 Z" fill="#fff" stroke="#555" stroke-width="0.8"/>
<circle cx="738" cy="313.6" r="1.3" fill="#d8c8b8"/>
<path d="M733.2,323.8 L737,320.6 L740.8,323.8 L737,327.0 Z" fill="#fff" stroke="#555" stroke-width="0.8"/>
<circle cx="737" cy="323.8" r="1.3" fill="#333"/>
<path d="M734.7,334.8 L738.5,331.6 L742.3,334.8 L738.5,338.0 Z" fill="#fff" stroke="#555" stroke-width="0.8"/>
<circle cx="738.5" cy="334.8" r="1.3" fill="#222"/>
<rect x="750.2" y="311" width="1.8" height="14" fill="#000"/>
<ellipse cx="751" cy="330.5" rx="4" ry="6.8" fill="#8fdcf0" stroke="#3a4a10" stroke-width="1.2"/>
<rect x="718.6" y="392.5" width="3.6" height="60" fill="#000"/>
<rect x="722.4" y="393" width="48.6" height="58.6" rx="3" fill="#fff" stroke="#000" stroke-width="1"/>
<rect x="737" y="397.2" width="31.3" height="50.4" rx="6" fill="#fff" stroke="#000" stroke-width="0.9"/>
<rect x="728.5" y="420.5" width="18.5" height="4" fill="#fff" stroke="#000" stroke-width="0.9"/>
<circle cx="752.5" cy="422.5" r="1.8" fill="#fff" stroke="#000" stroke-width="0.7"/>
<rect x="346" y="92" width="882" height="1" fill="#777"/><rect x="346" y="92" width="1" height="675" fill="#6e6e6e"/>
</svg>
<div id="vs" class="a">
  <svg class="a" style="left:0;top:0" width="16" height="674" viewBox="0 0 16 674">
    <rect x="1" y="17" width="14" height="469" fill="#c9c9c9"/>
    <path d="M4.5,10.5 L8,7 L11.5,10.5" fill="none" stroke="#606060" stroke-width="1.6"/>
    <path d="M4.5,662 L8,665.5 L11.5,662" fill="none" stroke="#606060" stroke-width="1.6"/>
  </svg>
</div>
<div id="hs" class="a">
  <svg class="a" style="left:0;top:0" width="882" height="15" viewBox="0 0 882 15">
    <rect x="17" y="1" width="545" height="14" fill="#c9c9c9"/>
    <path d="M10.5,4 L7,7.5 L10.5,11" fill="none" stroke="#606060" stroke-width="1.6"/>
    <path d="M871,4 L874.5,7.5 L871,11" fill="none" stroke="#606060" stroke-width="1.6"/>
  </svg>
</div>
<div id="corner" class="a"></div>
<svg class="a" style="left:1234px;top:794px" width="10" height="10" viewBox="0 0 10 10"><g fill="#bdbdbd"><rect x="7" y="1" width="2" height="2"/><rect x="4" y="4" width="2" height="2"/><rect x="7" y="4" width="2" height="2"/><rect x="1" y="7" width="2" height="2"/><rect x="4" y="7" width="2" height="2"/><rect x="7" y="7" width="2" height="2"/></g></svg>
<div id="status" class="a">
  <span style="left:3px">设计方案: 1168cm x 700cm, 楼层: 2/2 -- 缩放: 97% -- 使用 Ctrl + 鼠标滑轮缩放.</span>
  <span style="left:1102px">(x:430.5 y:-61.06cm)</span>
</div>
</body></html>
